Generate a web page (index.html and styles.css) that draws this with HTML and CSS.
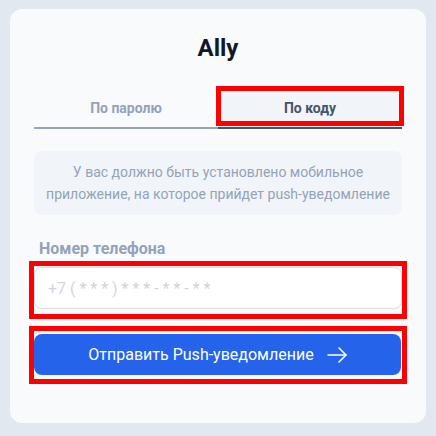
FILE: index.html
```html
<!DOCTYPE html>
<html lang="ru">
<head>
    <meta charset="UTF-8">
    <meta name="viewport" content="width=device-width, initial-scale=1.0">
    <title>Ally</title>
    <link rel="stylesheet" href="styles.css">
</head>
<body>
    <div class="card">
        <h1 class="title">Ally</h1>

        <div class="tabs">
            <button class="tab">По паролю</button>
            <button class="tab active marked">По коду</button>
        </div>

        <div class="notice">
            У вас должно быть установлено мобильное приложение, на которое прийдет push-уведомление
        </div>

        <label class="label" for="phone">Номер телефона</label>
        <div class="field-wrap marked-box">
            <input type="tel" id="phone" class="field" placeholder="+7 ( * * * ) * * * - * * - * *">
        </div>

        <div class="submit-wrap marked-box">
            <button class="submit">
                Отправить Push-уведомление
                <svg class="arrow" width="20" height="16" viewBox="0 0 20 16" fill="none" stroke="currentColor" stroke-width="1.5" stroke-linecap="round" stroke-linejoin="round">
                    <path d="M1 8h18"/>
                    <path d="M12 1l7 7-7 7"/>
                </svg>
            </button>
        </div>
    </div>
</body>
</html>
```

FILE: styles.css
```css
body {
    margin: 0;
    padding: 9px 10px;
    background-color: #e2e8f0;
    font-family: Roboto, "Liberation Sans", sans-serif;
}

.card {
    width: 416px;
    box-sizing: border-box;
    padding: 23px 24px 44px;
    background-color: #f8fafc;
    border-radius: 12px;
}

.title {
    margin: 0;
    font-size: 24px;
    line-height: 32px;
    font-weight: 700;
    text-align: center;
    color: #111827;
}

.tabs {
    display: flex;
    margin-top: 24px;
}

.tab {
    flex: 1;
    position: relative;
    height: 41px;
    padding: 0;
    border: none;
    border-bottom: 2px solid #94a3b8;
    background: none;
    font-family: inherit;
    font-size: 14px;
    font-weight: 700;
    color: #94a3b8;
    cursor: pointer;
}

.tab.active {
    background-color: #f1f5f9;
    border-bottom-color: #475569;
    color: #475569;
}

/* red highlight frames */
.marked::after {
    content: "";
    position: absolute;
    top: -2px;
    left: -2px;
    right: -2px;
    bottom: 1px;
    border: 5px solid #ff0000;
    pointer-events: none;
}

.marked-box {
    outline: 5px solid #ff0000;
}

.notice {
    margin-top: 22px;
    padding: 10px 12px;
    background-color: #f1f5f9;
    border-radius: 8px;
    font-size: 14px;
    line-height: 22px;
    text-align: center;
    color: #94a3b8;
}

.label {
    display: block;
    margin-top: 24px;
    padding-left: 5px;
    font-size: 16px;
    line-height: 20px;
    font-weight: 700;
    color: #94a3b8;
}

.field-wrap {
    margin-top: 7px;
    padding: 1px 0 5px;
}

.field {
    display: block;
    width: 100%;
    height: 42px;
    box-sizing: border-box;
    padding: 0 13px;
    border: 1px solid #dadee4;
    border-radius: 8px;
    background-color: #ffffff;
    font-family: inherit;
    font-size: 16px;
    color: #334155;
}

.field::placeholder {
    color: #d1d5db;
}

.submit-wrap {
    margin-top: 17px;
    padding: 3px 1px 4px 0;
}

.submit {
    display: flex;
    align-items: center;
    justify-content: center;
    gap: 13px;
    width: 100%;
    height: 41px;
    border: none;
    border-radius: 8px;
    background-color: #2563eb;
    font-family: inherit;
    font-size: 16px;
    color: #ffffff;
    cursor: pointer;
}

.arrow {
    display: block;
}
```
